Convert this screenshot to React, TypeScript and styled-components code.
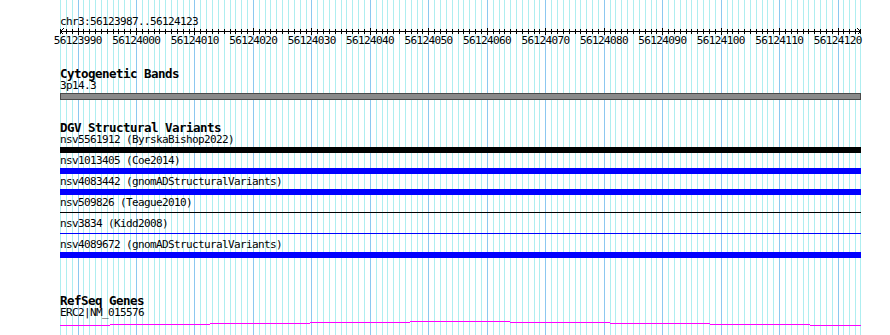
import React from "react";
import styled, { createGlobalStyle } from "styled-components";

const BP_START = 56123987;
const BP_COUNT = 137;
const TRACK_W = 801;
const PX = TRACK_W / BP_COUNT;
const FONT = `"DejaVu Sans Mono", "Liberation Mono", monospace`;

const GlobalStyle = createGlobalStyle`
  html, body { margin: 0; padding: 0; background: #ffffff; }
  #root { width: 890px; height: 335px; overflow: hidden; }
`;

const Page = styled.div`
  display: flex;
  width: 890px;
  height: 335px;
  padding-left: 60px;
  box-sizing: border-box;
  background: #ffffff;
  overflow: hidden;
`;

const TrackArea = styled.div`
  position: relative;
  width: ${TRACK_W}px;
  height: 335px;
  display: flex;
  flex-direction: column;
  padding-top: 16px;
  box-sizing: border-box;
`;

const GridLayer = styled.svg`
  position: absolute;
  top: 0;
  left: 0;
  z-index: 0;
  pointer-events: none;
`;

const Section = styled.section<{ $gap: number }>`
  position: relative;
  z-index: 1;
  display: flex;
  flex-direction: column;
  margin-top: ${(p) => p.$gap}px;
`;

const Title = styled.div`
  font-family: ${FONT};
  font-size: 11px;
  letter-spacing: -0.62px;
  line-height: 11px;
  height: 11px;
  color: #000;
  white-space: nowrap;
`;

const RulerSvg = styled.svg`
  display: block;
  overflow: visible;
`;

const TickLabels = styled.div`
  display: flex;
  margin-left: ${3 * PX - (10 * PX) / 2}px;
  height: 11px;
`;

const TickLabel = styled.div`
  flex: none;
  width: ${10 * PX}px;
  text-align: center;
  font-family: ${FONT};
  font-size: 11px;
  letter-spacing: -0.62px;
  text-indent: 0.62px;
  line-height: 11px;
  color: #000;
`;

const Heading = styled.h2`
  margin: 0;
  font-family: ${FONT};
  font-weight: bold;
  font-size: 12.5px;
  letter-spacing: -0.53px;
  line-height: 12px;
  height: 12px;
  color: #000;
  white-space: nowrap;
`;

const FeatureLabel = styled.div`
  font-family: ${FONT};
  font-size: 11px;
  letter-spacing: -0.62px;
  line-height: 12px;
  height: 12px;
  color: #000;
  white-space: nowrap;
`;

const BandBar = styled.div`
  margin-top: 1px;
  height: 7px;
  box-sizing: border-box;
  background: #8a8a8a;
  border: 1px solid #4a4a4a;
`;

const FeatureRow = styled.div`
  display: flex;
  flex-direction: column;
  height: 21px;
`;

const BarZone = styled.div`
  margin-top: 1px;
  height: 6px;
  display: flex;
  flex-direction: column;
`;

const Bar = styled.div<{ $color: string; $thin: boolean }>`
  height: ${(p) => (p.$thin ? 1 : 6)}px;
  margin-top: ${(p) => (p.$thin ? 2 : 0)}px;
  background: ${(p) => p.$color};
  width: 100%;
`;

const GeneSvg = styled.svg`
  display: block;
  margin-top: 1px;
`;

const xs = Array.from({ length: BP_COUNT + 1 }, (_, k) => Math.round(k * PX));

const Grid = () => (
  <GridLayer width={TRACK_W + 1} height={335} shapeRendering="crispEdges">
    {xs.map((x, k) => {
      const major = (BP_START + k) % 10 === 0;
      return (
        <line
          key={k}
          x1={Math.min(x, TRACK_W - 1) + 0.5}
          x2={Math.min(x, TRACK_W - 1) + 0.5}
          y1={0}
          y2={335}
          stroke={major ? "#8cc8f0" : "#aeeef0"}
          strokeWidth={1}
        />
      );
    })}
  </GridLayer>
);

const Ruler = () => {
  const labels = Array.from({ length: 14 }, (_, i) => 56123990 + i * 10);
  return (
    <Section $gap={0}>
      <Title>chr3:56123987..56124123</Title>
      <RulerSvg width={TRACK_W} height={8} shapeRendering="crispEdges">
        <line x1={0} x2={TRACK_W} y1={4.5} y2={4.5} stroke="#000" />
        {xs.map((x, k) => {
          const major = (BP_START + k) % 10 === 0;
          const xx = Math.min(x, TRACK_W - 1) + 0.5;
          return (
            <line
              key={k}
              x1={xx}
              x2={xx}
              y1={major ? 1 : 2}
              y2={major ? 8 : 7}
              stroke="#000"
            />
          );
        })}
        <path d="M0.5 4.5 L3.5 1.5 M0.5 4.5 L3.5 7.5" stroke="#000" fill="none" />
        <path
          d={`M${TRACK_W - 0.5} 4.5 L${TRACK_W - 3.5} 1.5 M${TRACK_W - 0.5} 4.5 L${TRACK_W - 3.5} 7.5`}
          stroke="#000"
          fill="none"
        />
      </RulerSvg>
      <TickLabels>
        {labels.map((l) => (
          <TickLabel key={l}>{l}</TickLabel>
        ))}
      </TickLabels>
    </Section>
  );
};

const variants = [
  { label: "nsv5561912 (ByrskaBishop2022)", color: "#000000", thin: false },
  { label: "nsv1013405 (Coe2014)", color: "#0000ff", thin: false },
  { label: "nsv4083442 (gnomADStructuralVariants)", color: "#0000ff", thin: false },
  { label: "nsv509826 (Teague2010)", color: "#000000", thin: true },
  { label: "nsv3834 (Kidd2008)", color: "#0000ff", thin: true },
  { label: "nsv4089672 (gnomADStructuralVariants)", color: "#0000ff", thin: false },
];

const geneSteps = [
  { x: 0, w: 50, y: 5 },
  { x: 50, w: 100, y: 4 },
  { x: 150, w: 100, y: 3 },
  { x: 250, w: 100, y: 2 },
  { x: 350, w: 100, y: 1 },
  { x: 450, w: 100, y: 2 },
  { x: 550, w: 100, y: 3 },
  { x: 650, w: 100, y: 4 },
  { x: 750, w: 51, y: 5 },
];

export default function App() {
  return (
    <>
      <GlobalStyle />
      <Page>
        <TrackArea>
          <Grid />
          <Ruler />
          <Section $gap={22}>
            <Heading>Cytogenetic Bands</Heading>
            <FeatureLabel>3p14.3</FeatureLabel>
            <BandBar />
          </Section>
          <Section $gap={22}>
            <Heading>DGV Structural Variants</Heading>
            {variants.map((v) => (
              <FeatureRow key={v.label}>
                <FeatureLabel>{v.label}</FeatureLabel>
                <BarZone>
                  <Bar $color={v.color} $thin={v.thin} />
                </BarZone>
              </FeatureRow>
            ))}
          </Section>
          <Section $gap={35}>
            <Heading>RefSeq Genes</Heading>
            <FeatureLabel>ERC2|NM_015576</FeatureLabel>
            <GeneSvg width={TRACK_W} height={8} shapeRendering="crispEdges">
              {geneSteps.map((s) => (
                <rect key={s.x} x={s.x} y={s.y} width={s.w} height={1} fill="#ff00ff" />
              ))}
            </GeneSvg>
          </Section>
        </TrackArea>
      </Page>
    </>
  );
}
